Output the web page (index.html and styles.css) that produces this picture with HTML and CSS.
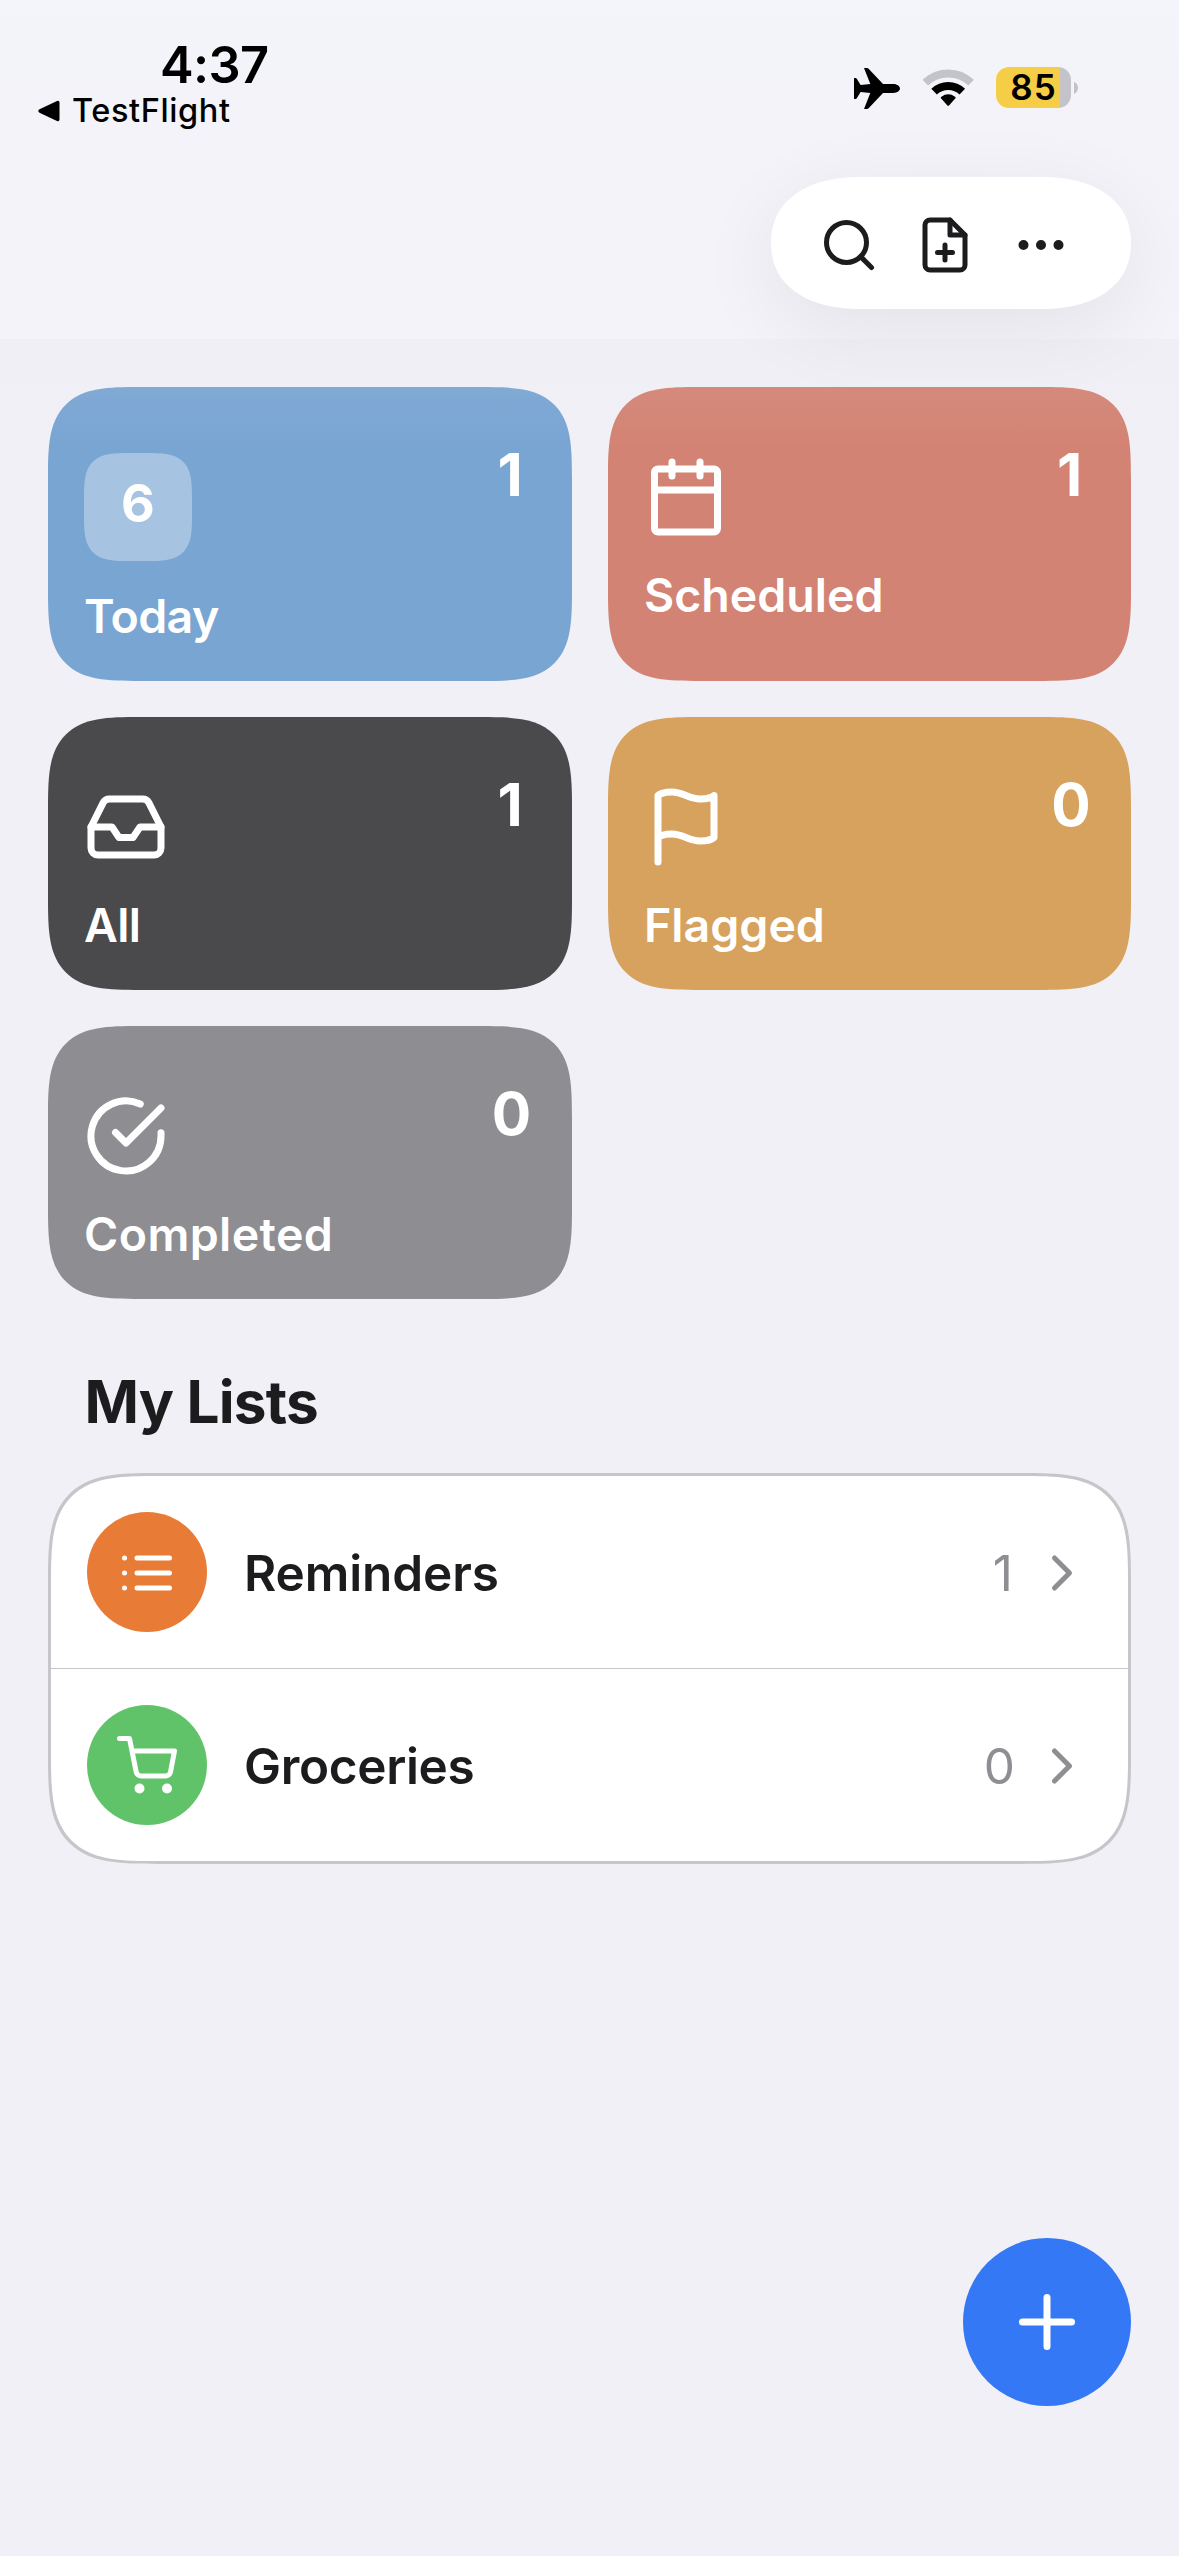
FILE: index.html
```html
<!DOCTYPE html>
<html lang="en">
<head>
<meta charset="utf-8">
<title>Reminders</title>
<link rel="stylesheet" href="styles.css">
</head>
<body>
<div class="screen">
  <header class="header">
    <div class="status">
      <div class="status-left">
        <div class="time">4:37</div>
        <div class="back">
          <svg class="back-arrow" width="22" height="22" viewBox="0 0 22 22"><path d="M1.500 9.300 19 .9q2.500-1 2.500 1.800v16.600q0 2.800-2.500 1.800L1.500 12.700q-2.500-1.700 0-3.400z"/></svg>
          <span>TestFlight</span>
        </div>
      </div>
      <div class="status-right">
        <svg class="plane" width="46" height="43" viewBox="0 -2 46 43"><path d="M10 0h2.500q1.600 0 2.600 1.200L29 16h10.500c4 0 6.500 2.600 6.500 4.500S43.500 24.900 39.500 24.900H29L15.100 39.800q-1 1.200-2.600 1.200H10l6.300-16-9.700-.9-3.800 6.200q-.5.7-1.300.7H0V10h1.500q.8 0 1.300.7l3.800 6.200 9.700-.9z"/></svg>
        <svg class="wifi" width="51" height="37" viewBox="0 0 51 37" fill="none" stroke-width="8"><path stroke="#c4c3c9" d="M2.300 13.700a33 33 0 0 1 45.800 0"/><path stroke="#000" d="M11.100 22.700a20.300 20.300 0 0 1 28.200 0"/><path fill="#000" d="M18.200 29.600q-1-1 .2-1.900a12 12 0 0 1 13.600 0q1.200.9.200 1.900L26 36.400q-.8.800-1.600 0z"/></svg>
        <div class="battery"><div class="battery-body">85</div><svg width="4" height="12" viewBox="0 0 4 12"><path fill="#c4c3c9" d="M0 0c5.400 2 5.400 10 0 12z"/></svg></div>
      </div>
    </div>
    <nav class="toolbar">
      <svg class="icon" viewBox="0 0 24 24"><circle cx="11" cy="11" r="8"/><path d="m21 21-4.350-4.350"/></svg>
      <svg class="icon" viewBox="0 0 24 24"><path d="M14 2H6a2 2 0 0 0-2 2v16a2 2 0 0 0 2 2h12a2 2 0 0 0 2-2V8z"/><path d="M14 2v6h6M12 18v-6M9 15h6"/></svg>
      <svg class="icon" viewBox="0 0 24 24"><circle cx="12" cy="12" r="1"/><circle cx="19" cy="12" r="1"/><circle cx="5" cy="12" r="1"/></svg>
    </nav>
  </header>

  <main class="content">
    <section class="cards">
      <article class="card today">
        <div class="card-main"><div class="badge">6</div><div class="label">Today</div></div>
        <div class="total one">1</div>
      </article>
      <article class="card scheduled">
        <div class="card-main">
          <svg class="icon" viewBox="0 0 24 24"><rect x="3" y="4" width="18" height="18" rx="1"/><path d="M16 2v4M8 2v4M3 10h18"/></svg>
          <div class="label">Scheduled</div>
        </div>
        <div class="total one">1</div>
      </article>
      <article class="card all">
        <div class="card-main">
          <svg class="icon" viewBox="0 0 24 24"><path d="M22 12h-6l-2 3h-4l-2-3H2"/><path d="M5.450 5.110 2 12v6a2 2 0 0 0 2 2h16a2 2 0 0 0 2-2v-6l-3.450-6.890A2 2 0 0 0 16.760 4H7.240a2 2 0 0 0-1.790 1.110z"/></svg>
          <div class="label">All</div>
        </div>
        <div class="total one">1</div>
      </article>
      <article class="card flagged">
        <div class="card-main">
          <svg class="icon" viewBox="0 0 24 24"><path d="M4 15s1-1 4-1 5 2 8 2 4-1 4-1V3s-1 1-4 1-5-2-8-2-4 1-4 1zM4 22v-7"/></svg>
          <div class="label">Flagged</div>
        </div>
        <div class="total">0</div>
      </article>
      <article class="card completed">
        <div class="card-main">
          <svg class="icon" viewBox="0 0 24 24"><path d="M22 11.080V12a10 10 0 1 1-5.930-9.140"/><path d="M22 4 12 14.010l-3-3"/></svg>
          <div class="label">Completed</div>
        </div>
        <div class="total">0</div>
      </article>
    </section>

    <h2 class="heading">My Lists</h2>
    <ul class="lists">
      <li class="row">
        <span class="disc orange"><svg class="icon" viewBox="0 0 24 24"><path d="M8 6h13M8 12h13M8 18h13M3 6h.010M3 12h.010M3 18h.010"/></svg></span>
        <span class="name">Reminders</span>
        <span class="count one">1</span>
        <svg class="icon chevron" viewBox="0 0 24 24"><path d="m9 18 6-6-6-6"/></svg>
      </li>
      <li class="row">
        <span class="disc green"><svg class="icon" viewBox="0 0 24 24"><circle cx="9" cy="21" r="1"/><circle cx="20" cy="21" r="1"/><path d="M1 1h4l2.680 13.390a2 2 0 0 0 2 1.610h9.720a2 2 0 0 0 2-1.610L23 6H6"/></svg></span>
        <span class="name groceries">Groceries</span>
        <span class="count">0</span>
        <svg class="icon chevron" viewBox="0 0 24 24"><path d="m9 18 6-6-6-6"/></svg>
      </li>
    </ul>
  </main>

  <button class="fab" aria-label="Add"><svg class="icon" viewBox="0 0 24 24"><path d="M12 5v14M5 12h14"/></svg></button>
</div>
</body>
</html>
```
FILE: styles.css
```css
* { box-sizing: border-box; }

body {
  margin: 0;
  background: #f1f0f6;
  color: #1c1c1e;
  font-family: Inter, "Liberation Sans", sans-serif;
}

.screen {
  position: relative;
  width: 1179px;
  height: 2556px;
  overflow: hidden;
}

.icon {
  display: block;
  flex: none;
  width: 60px;
  height: 60px;
  fill: none;
  stroke: currentColor;
  stroke-width: 2;
  stroke-linecap: round;
  stroke-linejoin: round;
}

/* Header */
.header {
  position: relative;
  z-index: 1;
  height: 339px;
  background: linear-gradient(#f3f5fa, #f3f3f9 45%, #f4f3fa);
}

.header::after {
  content: "";
  position: absolute;
  top: 100%;
  left: 0;
  right: 0;
  height: 110px;
  background: linear-gradient(rgba(232, 232, 238, 0.12), rgba(232, 232, 238, 0));
}

.status {
  display: flex;
  justify-content: space-between;
  align-items: center;
  height: 175px;
  padding: 0 101px 0 38px;
  color: #000;
}

.status-left {
  align-self: flex-start;
  padding-top: 37px;
}

.time {
  padding-left: 122px;
  font-size: 50.5px;
  font-weight: 600;
  line-height: 56px;
  letter-spacing: -0.6px;
}

.back {
  display: flex;
  align-items: center;
  gap: 12px;
  font-size: 32.5px;
  font-weight: 500;
  line-height: 35px;
  letter-spacing: 0.6px;
}

.status-right {
  display: flex;
  align-items: center;
}

.plane { margin-right: 23px; }
.wifi { margin-right: 22px; }

.battery {
  display: flex;
  align-items: center;
  gap: 3px;
}

.battery-body {
  width: 75px;
  height: 41px;
  border-radius: 13px;
  background: linear-gradient(90deg, #f5cd46 64px, #c4c3c9 64px);
  font-size: 35px;
  font-weight: 600;
  line-height: 41px;
  letter-spacing: 1px;
  text-align: center;
}

.toolbar {
  display: flex;
  gap: 36px;
  width: 360px;
  height: 132px;
  margin: 2px 48px 0 auto;
  padding: 37.5px 60px 0 48px;
  border-radius: 90px / 66px;
  corner-shape: superellipse(1.17);
  background: #fff;
  box-shadow: 0 20px 84px rgba(0, 0, 0, 0.07);
}

/* Summary cards */
.content { padding: 48px 48px 0; }

.cards {
  display: grid;
  grid-template-columns: 1fr 1fr;
  gap: 36px;
}

.card {
  display: flex;
  justify-content: space-between;
  padding: 0 40px 35px 36px;
  border-radius: 92px;
  corner-shape: superellipse(1.7);
  color: #fff;
}

.card-main {
  display: flex;
  flex-direction: column;
  gap: 25px;
  padding-top: 66px;
}

.card .icon {
  width: 84px;
  height: 84px;
  margin: 1.5px 0;
}

.label {
  padding-left: 0.5px;
  font-size: 46.5px;
  font-weight: 600;
  line-height: 60px;
}

.badge {
  width: 108px;
  height: 108px;
  border-radius: 46px;
  corner-shape: superellipse(1.7);
  background: #a6c3e1;
  font-size: 52px;
  font-weight: 700;
  line-height: 102px;
  text-align: center;
}

.total {
  width: 40px;
  padding-top: 52px;
  font-size: 58.5px;
  font-weight: 700;
  line-height: 72px;
  text-align: center;
}

.total.one { padding-right: 3px; }

.today { background: #79a5d3; }
.scheduled { background: #d38373; }
.all { background: #4a4a4c; }
.flagged { background: #d6a25d; }
.completed { background: #8e8d92; }

.today .label,
.all .label { padding-left: 0; letter-spacing: -0.6px; }
.completed .label { padding-left: 0; letter-spacing: 0.4px; }

/* Lists */
.heading {
  margin: 67px 0 35px;
  padding-left: 36.5px;
  font-size: 58.5px;
  font-weight: 700;
  line-height: 72px;
  letter-spacing: -0.75px;
}

.lists {
  margin: 0;
  padding: 0;
  border: 3px solid #c6c5ca;
  border-radius: 110px;
  corner-shape: superellipse(1.7);
  background: #fff;
  list-style: none;
}

.row {
  display: flex;
  align-items: center;
  height: 192px;
  padding: 0 36px;
}

.row + .row {
  height: 193px;
  border-top: 1px solid #c6c5ca;
}

.disc {
  display: flex;
  align-items: center;
  justify-content: center;
  width: 120px;
  height: 120px;
  margin-right: 36px;
  border-radius: 50%;
  color: #fff;
}

.disc .icon,
.chevron { margin-top: 1px; }

.orange { background: #e87c37; }
.green { background: #60c36a; }

.name {
  flex: 1;
  padding: 2px 0 0 1px;
  font-size: 49.5px;
  font-weight: 600;
  line-height: 60px;
  letter-spacing: -0.1px;
}

.groceries { letter-spacing: -0.35px; }

.count {
  padding-top: 2px;
  color: #8e8e93;
  font-size: 49.5px;
  line-height: 60px;
}

.count.one { padding-right: 2px; }

.chevron {
  margin-left: 17px;
  color: #8e8e93;
}

/* Floating add button */
.fab {
  position: absolute;
  right: 48px;
  bottom: 150px;
  display: flex;
  align-items: center;
  justify-content: center;
  width: 168px;
  height: 168px;
  padding: 0;
  border: 0;
  border-radius: 50%;
  background: #3478f6;
  color: #fff;
}

.fab .icon {
  width: 84px;
  height: 84px;
}
```
